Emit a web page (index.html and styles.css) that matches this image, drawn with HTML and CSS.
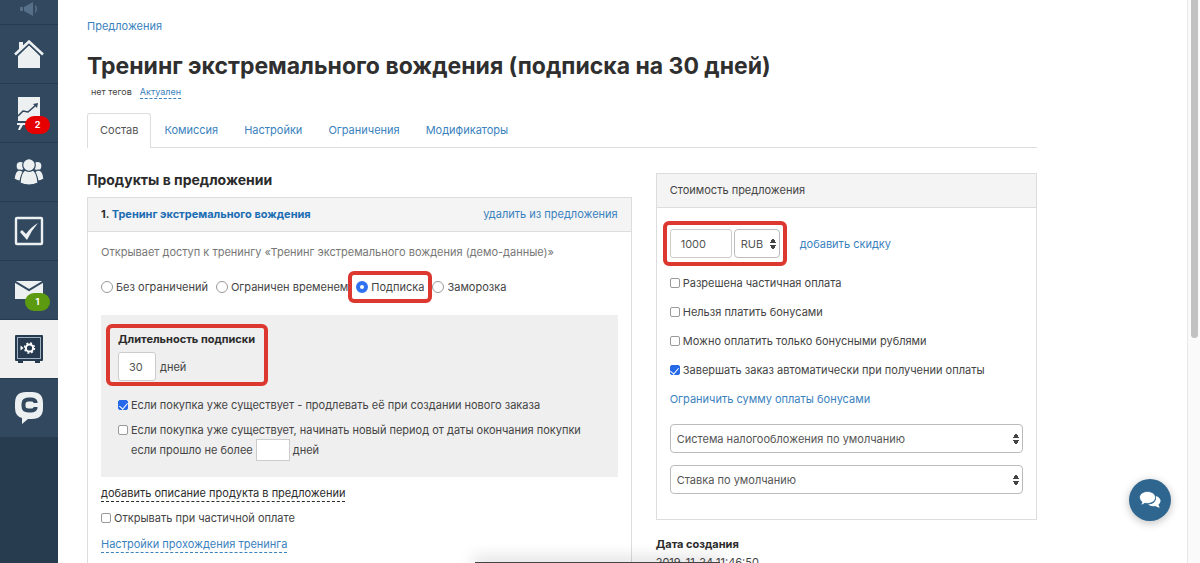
FILE: index.html
```html
<!DOCTYPE html>
<html lang="ru">
<head>
<meta charset="utf-8">
<title>Тренинг экстремального вождения</title>
<link rel="stylesheet" href="styles.css">
</head>
<body>
<div class="app">
  <nav class="sidebar" aria-label="Разделы">
    <a class="side-item side-first" href="#"><svg width="20" height="14" viewBox="0 0 20 14"><path fill="#56708a" d="M1 5h3v4H1zM5 5l9-5v14l-9-5zM15.500 3.500q2 3.500 0 7h1.500q2-3.500 0-7z"/></svg></a>
    <a class="side-item" href="#"><svg width="30" height="30" viewBox="0 0 30 30"><path fill="#ecf0f1" d="M4 17 15 6l11 11v12H4z"/><path fill="none" stroke="#31485f" stroke-width="5" d="M0 17 15 3l15 14"/><path fill="#ecf0f1" d="M5 3h4v4l-4 4z"/><path fill="none" stroke="#ecf0f1" stroke-width="2.600" d="M1 15.500 15 2.500l14 13"/></svg></a>
    <a class="side-item" href="#"><svg width="30" height="34" viewBox="0 0 30 34"><path fill="#ecf0f1" d="M4 1h22v24H4zM3 27h22v2H9l-3 5H4l2-5H3z"/><path fill="none" stroke="#31485f" stroke-width="1.600" d="m4 20 5-5 5 1 8-7"/><path fill="#31485f" d="m19 8 5-1-1 5z"/></svg><span class="badge badge-red">2</span></a>
    <a class="side-item" href="#"><svg width="30" height="28" viewBox="0 0 30 28"><g fill="#ecf0f1" stroke="#31485f" stroke-width="1.200"><circle cx="6.500" cy="8" r="4.500"/><circle cx="23.500" cy="8" r="4.500"/><path d="M0 21q1-9 6-9l4 2v9q-6 1-10-2zM30 21q-1-9-6-9l-4 2v9q6 1 10-2z"/><path d="M6 25q1-12 6-13h6q5 1 6 13-9 4-18 0z"/><circle cx="15" cy="7" r="6.300"/></g></svg></a>
    <a class="side-item" href="#"><svg width="30" height="30" viewBox="0 0 30 30"><rect x="2" y="2" width="26" height="26" rx="1" fill="none" stroke="#ecf0f1" stroke-width="2.400"/><path fill="#ecf0f1" d="m6 16 2-2 4 4Q17 11 24 7q-7 8-11 17z"/></svg></a>
    <a class="side-item" href="#"><svg width="30" height="20" viewBox="0 0 30 20"><path fill="#ecf0f1" d="M1 1h28v18H1z"/><path fill="none" stroke="#31485f" stroke-width="2" d="m0 1 15 9L30 1"/></svg><span class="badge badge-green">1</span></a>
    <a class="side-item side-active" href="#"><svg width="30" height="30" viewBox="0 0 30 30"><path fill="#263b50" d="M2 1h26q1 0 1 1v24q0 1-1 1h-2v2h-5v-2H9v2H4v-2H2q-1 0-1-1V2q0-1 1-1z"/><rect x="3.500" y="3.500" width="23" height="21" fill="none" stroke="#9fb0bf" stroke-width="1"/><circle cx="15.500" cy="14" r="3.600" fill="none" stroke="#fff" stroke-width="2"/><circle cx="15.500" cy="14" r="5" fill="none" stroke="#fff" stroke-width="1.400" stroke-dasharray="2 1.930"/><path fill="#fff" d="m6.500 11.500 3 2.500-3 2.500z"/></svg></a>
    <a class="side-item" href="#"><svg width="30" height="34" viewBox="0 0 30 34"><path fill="#ecf0f1" d="M12 1h6q11 0 11 11v5q0 11-11 11h-4l-6 5v-6q-7-2-7-10v-5Q1 1 12 1z"/><path fill="none" stroke="#31485f" stroke-width="4" d="M21.500 12V11q-1-2.500-4-2.500h-3q-5 0-5 4.500v2q0 4.500 5 4.500h3q3 0 4-2.500V16"/></svg></a>
  </nav>

  <main class="main">
    <div class="content">
      <div class="crumbs"><a href="#">Предложения</a></div>
      <h1 class="title">Тренинг экстремального вождения (подписка на 30 дней)</h1>
      <div class="tags"><span>нет тегов</span><a class="dashed" href="#">Актуален</a></div>
      <div class="tabs">
        <a class="tab tab-active" href="#">Состав</a>
        <a class="tab" href="#">Комиссия</a>
        <a class="tab" href="#">Настройки</a>
        <a class="tab" href="#">Ограничения</a>
        <a class="tab" href="#">Модификаторы</a>
      </div>

      <div class="columns">
        <section>
          <h2 class="subtitle">Продукты в предложении</h2>
          <div class="panel">
            <div class="panel-head"><b>1. <a class="strong-link" href="#">Тренинг экстремального вождения</a></b><a href="#">удалить из предложения</a></div>
            <div class="panel-body product">
              <p class="note">Открывает доступ к тренингу «Тренинг экстремального вождения (демо-данные)»</p>
              <div class="radios">
                <label class="choice"><input type="radio" name="access">Без ограничений</label>
                <label class="choice"><input type="radio" name="access">Ограничен временем</label>
                <label class="choice mark mark-radio"><input type="radio" name="access" checked>Подписка</label>
                <label class="choice"><input type="radio" name="access">Заморозка</label>
              </div>
              <div class="period">
                <div class="duration mark mark-duration">
                  <label class="duration-label" for="days">Длительность подписки</label>
                  <div class="duration-row"><input class="field field-days" id="days" type="text" value="30"><span>дней</span></div>
                </div>
                <label class="check"><input type="checkbox" checked>Если покупка уже существует - продлевать её при создании нового заказа</label>
                <div class="extend">
                  <label class="check"><input type="checkbox">Если покупка уже существует, начинать новый период от даты окончания покупки</label>
                  <div class="limit"><label for="limit">если прошло не более</label><input class="field-small" id="limit" type="text"><span>дней</span></div>
                </div>
              </div>
              <div class="line"><a class="dashed dark" href="#">добавить описание продукта в предложении</a></div>
              <label class="check open"><input type="checkbox">Открывать при частичной оплате</label>
              <div class="line"><a class="dashed" href="#">Настройки прохождения тренинга</a></div>
            </div>
          </div>
        </section>

        <aside>
          <div class="panel">
            <div class="panel-head"><span>Стоимость предложения</span></div>
            <div class="panel-body price">
              <div class="price-row">
                <div class="price-fields mark mark-price">
                  <input class="field field-price" type="text" value="1000" aria-label="Цена">
                  <select class="select select-currency" aria-label="Валюта"><option>RUB</option></select>
                </div>
                <a href="#">добавить скидку</a>
              </div>
              <div class="options">
                <label class="check"><input type="checkbox">Разрешена частичная оплата</label>
                <label class="check"><input type="checkbox">Нельзя платить бонусами</label>
                <label class="check"><input type="checkbox">Можно оплатить только бонусными рублями</label>
                <label class="check"><input type="checkbox" checked>Завершать заказ автоматически при получении оплаты</label>
                <a href="#">Ограничить сумму оплаты бонусами</a>
              </div>
              <div class="taxes">
                <select class="select" aria-label="Система налогообложения"><option>Система налогообложения по умолчанию</option></select>
                <select class="select" aria-label="Ставка"><option>Ставка по умолчанию</option></select>
              </div>
            </div>
          </div>
          <div class="created"><b>Дата создания</b><span>2019-11-24 11:46:50</span></div>
        </aside>
      </div>
    </div>
  </main>
  <div class="scrollbar"><div class="thumb"></div></div>
</div>
<div class="dock"></div>
<button class="chat" type="button" aria-label="Чат"><svg width="22" height="18" viewBox="0 0 22 18"><path fill="#fff" d="M17 5q5 2 4.500 5.500-.5 2-2 3 .3 2 1.500 3-3 0-4.500-1.500Q12 16 9 13.500q7-.5 8-5.500z"/><path fill="#fff" stroke="#2f6690" stroke-width=".8" d="M8.500.5c4.500 0 8 2.500 8 6s-3.500 6-8 6q-1.500 0-2.500-.3Q4 14 1.500 14 3 12.500 3 11 .5 9 .5 6.500c0-3.500 3.500-6 8-6z"/></svg></button>
</body>
</html>
```
FILE: styles.css
```css
* { box-sizing: border-box; }
body {
  margin: 0;
  font: 11px/20px Inter, "Liberation Sans", sans-serif;
  color: #444;
  background: #fff;
}
a { color: #3a82be; text-decoration: none; }
b { color: #2b2b2b; }
input, select, button { font: inherit; color: #555; margin: 0; }

.app { display: flex; height: 100vh; overflow: hidden; }

.sidebar { flex: none; width: 58px; background: #283c50; }
.side-item {
  position: relative;
  display: flex;
  align-items: center;
  justify-content: center;
  height: 59px;
  background: #31485f;
  border-bottom: 1px solid #263b50;
}
.side-first { height: 25px; align-items: flex-start; padding-top: 2px; }
.side-active { background: #f0f0f0; }
.badge {
  position: absolute;
  left: 25px;
  top: 32px;
  width: 25px;
  height: 18px;
  border-radius: 9px;
  font-size: 9px;
  line-height: 18px;
  font-weight: 700;
  text-align: center;
  color: #fff;
}
.badge-red { background: #e60000; }
.badge-green { background: #5c9a10; }

.main { flex: 1; min-width: 0; padding: 16px 28px 0 29px; }
.content { max-width: 950px; }
.title { margin: 15px 0 0; font-size: 23px; line-height: 30px; font-weight: 700; color: #2f2f2f; }
.tags { display: flex; gap: 8px; margin: 5px 0 0 4px; font-size: 9px; line-height: 12px; }
.dashed { border-bottom: 1px dashed #3a82be; }
.dashed.dark { color: #2b2b2b; border-color: #2b2b2b; }
.tabs { display: flex; margin-top: 14px; border-bottom: 1px solid #ddd; }
.tab { padding: 6px 12px 7px; border: 1px solid transparent; border-bottom: 0; line-height: 20px; }
.tab-active { margin-bottom: -1px; color: #555; background: #fff; border-color: #ddd; border-radius: 3px 3px 0 0; }

.columns { display: grid; grid-template-columns: 10fr 7fr; gap: 24px; padding-top: 25px; }
.subtitle { margin: -3px 0 7px; font-size: 14px; line-height: 20px; color: #2b2b2b; }
.panel { border: 1px solid #ddd; }
.panel-head {
  display: flex;
  justify-content: space-between;
  padding: 6px 13px 7px;
  line-height: 20px;
  background: #f4f4f4;
  border-bottom: 1px solid #ddd;
}
.strong-link { color: #1b6db3; }
.panel-body { padding: 0 13px; }
.note { margin: 10px 0 15px; color: #777; }

.radios { display: flex; gap: 8px; margin-bottom: 18px; }
.choice, .check { display: flex; align-items: center; gap: 3px; line-height: 20px; white-space: nowrap; }
input[type="radio"], input[type="checkbox"] {
  appearance: none;
  flex: none;
  width: 10px;
  height: 10px;
  border: 1px solid #999;
  border-radius: 2px;
  background: #fff;
}
input[type="radio"] { width: 12px; height: 12px; border-radius: 50%; }
input[type="radio"]:checked { border: 4px solid #2f72f0; }
input[type="checkbox"]:checked { border-color: #2568e8; background: #2568e8; }
input[type="checkbox"]:checked::after {
  content: "";
  display: block;
  width: 4px;
  height: 7px;
  margin: 0 auto;
  border: solid #fff;
  border-width: 0 1px 1px 0;
  transform: rotate(40deg);
}

.mark { position: relative; }
.mark::after { content: ""; position: absolute; border: 4px solid #dd382f; border-radius: 6px; pointer-events: none; }
.mark-radio::after { inset: -6px -8px; }
.mark-duration::after { inset: -5px -13px -5px -12px; }
.mark-price::after { inset: -8px -7px; }

.period { display: flex; flex-direction: column; padding: 14px 17px 17px; background: #efefef; }
.duration { align-self: flex-start; margin-bottom: 14px; }
.duration-label { display: block; font-weight: 700; color: #2b2b2b; line-height: 20px; margin-bottom: 3px; }
.duration-row { display: flex; align-items: center; gap: 4px; }
.field { height: 29px; padding: 0 10px; background: #fff; border: 1px solid #ccc; border-radius: 3px; }
.field-days { width: 38px; }
.field-price { width: 62px; }
.extend { margin-top: 5px; line-height: 20px; }
.limit { display: flex; align-items: center; gap: 3px; height: 20px; padding-left: 13px; }
.field-small { width: 34px; height: 22px; padding: 0 4px; border: 1px solid #ccc; background: #fff; }
.line { margin-top: 6px; line-height: 20px; }
.line a { display: inline-block; line-height: 15px; }
.open { margin-top: 5px; }
.product { padding-bottom: 40px; }

.price { padding: 21px 13px 25px; }
.price-row { display: flex; align-items: center; gap: 20px; }
.price-fields { display: flex; gap: 2px; }
.select {
  appearance: none;
  width: 100%;
  height: 29px;
  padding: 0 6px;
  border: 1px solid #bbb;
  border-radius: 4px;
  background:
    conic-gradient(from 153deg at 50% 0, #444 54deg, transparent 0) right 3px top 8px / 6px 5px no-repeat,
    conic-gradient(from -27deg at 50% 100%, #444 54deg, transparent 0) right 3px top 14px / 6px 5px no-repeat,
    #fff;
  background:
    linear-gradient(to top right, #444 50%, transparent 52%) right 3px top 8px / 3px 5px no-repeat,
    linear-gradient(to top left, #444 50%, transparent 52%) right 6px top 8px / 3px 5px no-repeat,
    linear-gradient(to bottom right, #444 50%, transparent 52%) right 3px top 15px / 3px 5px no-repeat,
    linear-gradient(to bottom left, #444 50%, transparent 52%) right 6px top 15px / 3px 5px no-repeat,
    #fff;
}
.select-currency { width: 46px; }
.options { display: flex; flex-direction: column; align-items: flex-start; gap: 9px; margin: 15px 0; }
.options a { line-height: 20px; }
.taxes { display: flex; flex-direction: column; gap: 12px; }
.created { display: flex; flex-direction: column; margin-top: 15px; line-height: 18px; }

.scrollbar { flex: none; width: 13px; padding: 0 2px; background: #fafafa; border-left: 1px solid #e8e8e8; }
.thumb { width: 7px; height: 60vh; margin-left: 1px; background: #c1c1c1; border-radius: 0 0 4px 4px; }
.dock { position: fixed; left: 475px; bottom: 0; width: 245px; height: 1px; background: #444; box-shadow: 0 0 16px 2px rgba(0, 0, 0, .3); }
.chat {
  position: fixed;
  right: 29px;
  bottom: 42px;
  display: flex;
  align-items: center;
  justify-content: center;
  width: 42px;
  height: 42px;
  padding: 0;
  border: 0;
  border-radius: 50%;
  background: #2f6690;
  box-shadow: 0 2px 8px rgba(0, 0, 0, .25);
}
```
